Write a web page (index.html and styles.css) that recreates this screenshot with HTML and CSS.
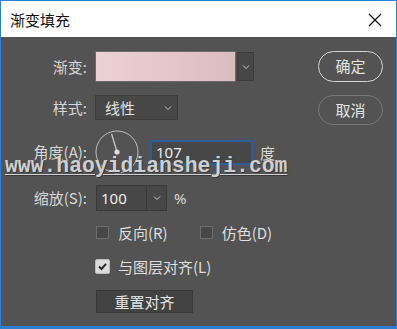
FILE: index.html
```html
<!DOCTYPE html>
<html lang="zh">
<head>
<meta charset="utf-8">
<title>渐变填充</title>
<link rel="stylesheet" href="styles.css">
</head>
<body>
<div class="window">
  <div class="titlebar">
    <span class="title">渐变填充</span>
    <svg class="close" width="14" height="14" viewBox="0 0 14 14"><path d="M1 1L13 13M13 1L1 13" stroke="#111" stroke-width="1.2" fill="none"/></svg>
  </div>
  <div class="body">
    <div class="form">
      <div class="row r1">
        <span class="label">渐变:</span>
        <div class="ctrl">
          <div class="swatch"></div>
          <div class="drop-btn"><svg width="8" height="6" viewBox="0 0 8 6"><path d="M1 1.5L4 4.5L7 1.5" stroke="#c8c8c8" stroke-width="1" fill="none"/></svg></div>
        </div>
      </div>
      <div class="row r2">
        <span class="label">样式:</span>
        <div class="ctrl">
          <div class="select"><span>线性</span><svg width="8" height="6" viewBox="0 0 8 6"><path d="M1 1.5L4 4.5L7 1.5" stroke="#c8c8c8" stroke-width="1" fill="none"/></svg></div>
        </div>
      </div>
      <div class="row r3">
        <span class="label">角度(A):</span>
        <div class="ctrl">
          <svg class="dial" width="44" height="44" viewBox="0 0 44 44">
            <circle cx="22" cy="22" r="21" stroke="#bdbdbd" stroke-width="1" fill="none"/>
            <path d="M22 22L16.6 3.8" stroke="#d0d0d0" stroke-width="1.2"/>
            <circle cx="22" cy="22" r="2.6" fill="#dcdcdc"/>
          </svg>
          <div class="angle-input">107</div>
          <span class="unit">度</span>
        </div>
      </div>
      <div class="row r4">
        <span class="label">缩放(S):</span>
        <div class="ctrl">
          <div class="scale-input"><span class="val">100</span><span class="scale-drop"><svg width="8" height="6" viewBox="0 0 8 6"><path d="M1 1.5L4 4.5L7 1.5" stroke="#c8c8c8" stroke-width="1" fill="none"/></svg></span></div>
          <span class="unit pct">%</span>
        </div>
      </div>
      <div class="row r5">
        <span class="label"></span>
        <div class="ctrl">
          <label class="check"><span class="box"></span>反向(R)</label>
          <label class="check dither"><span class="box"></span>仿色(D)</label>
        </div>
      </div>
      <div class="row r6">
        <span class="label"></span>
        <div class="ctrl">
          <label class="check"><span class="box checked"><svg width="11" height="11" viewBox="0 0 11 11"><path d="M2 5.5L4.5 8L9 2.8" stroke="#2a2a2a" stroke-width="2" fill="none"/></svg></span>与图层对齐(L)</label>
        </div>
      </div>
      <div class="row r7">
        <span class="label"></span>
        <div class="ctrl">
          <div class="reset">重置对齐</div>
        </div>
      </div>
    </div>
    <div class="actions">
      <div class="pill ok">确定</div>
      <div class="pill cancel">取消</div>
    </div>
    <div class="watermark">www.haoyidiansheji.com</div>
  </div>
</div>
</body>
</html>
```

FILE: styles.css
```css
* { box-sizing: border-box; }
html, body { margin: 0; padding: 0; }
body {
  width: 397px;
  height: 329px;
  overflow: hidden;
  font-family: "Noto Sans CJK SC", "Noto Sans", sans-serif;
  background: #535353;
}
.window {
  width: 397px;
  height: 329px;
  border: 1px solid #2d7fd4;
  border-bottom: 3px solid #2d7fd4;
  display: flex;
  flex-direction: column;
  background: #535353;
}
.titlebar {
  height: 36px;
  background: #ffffff;
  display: flex;
  align-items: center;
  justify-content: space-between;
  padding: 0 14px 0 9px;
  flex: none;
}
.title {
  font-size: 15px;
  color: #111;
  letter-spacing: 0;
}
.close { display: block; margin-top: 1px; }
.body {
  flex: 1;
  display: flex;
  position: relative;
  color: #d8d8d8;
  font-size: 15px;
}
.form {
  flex: 1;
  padding-top: 14px;
}
.row {
  display: grid;
  grid-template-columns: 86px auto;
  column-gap: 8px;
  align-items: center;
}
.label {
  text-align: right;
  line-height: 20px;
  color: #d6d6d6;
}
.ctrl {
  display: flex;
  align-items: center;
}
.r1 { height: 31px; }
.r2 { height: 25px; margin-top: 13px; }
.r3 { height: 44px; margin-top: 10px; }
.r4 { height: 26px; margin-top: 11px; }
.r5 { height: 20px; margin-top: 11px; }
.r6 { height: 20px; margin-top: 14px; }
.r7 { height: 23px; margin-top: 14px; }

.swatch {
  width: 141px;
  height: 31px;
  background: linear-gradient(90deg, #ecd1d5 0%, #e3c4c9 60%, #dbbcc1 100%);
  border: 1px solid #6a6a6a;
}
.drop-btn {
  width: 17px;
  height: 29px;
  margin-left: 1px;
  background: #474747;
  border: 1px solid #3c3c3c;
  display: flex;
  align-items: center;
  justify-content: center;
}
.drop-btn svg, .select svg, .scale-drop svg { display: block; }

.select {
  width: 83px;
  height: 25px;
  background: #474747;
  border: 1px solid #3d3d3d;
  display: flex;
  align-items: center;
  justify-content: space-between;
  padding: 0 5px 0 9px;
  color: #e2e2e2;
}
.dial { display: block; margin-left: 0; }
.angle-input {
  width: 103px;
  height: 25px;
  margin-left: 11px;
  background: #474747;
  border: 2px solid #2c5b9e;
  padding-left: 4px;
  line-height: 21px;
  color: #ececec;
  font-family: "Noto Sans", sans-serif;
  font-size: 15px;
}
.unit { margin-left: 7px; color: #d8d8d8; }
.scale-input {
  width: 71px;
  height: 26px;
  background: #474747;
  border: 1px solid #3a3a3a;
  display: flex;
  align-items: center;
  margin-left: 1px;
}
.scale-input .val {
  width: 50px;
  padding-left: 4px;
  font-family: "Noto Sans", sans-serif;
  color: #ececec;
  line-height: 24px;
  border-right: 1px solid #3a3a3a;
}
.scale-drop {
  flex: 1;
  display: flex;
  align-items: center;
  justify-content: center;
}
.pct { margin-left: 7px; font-family: "Noto Sans", sans-serif; }

.check {
  display: flex;
  align-items: center;
  color: #dedede;
  white-space: nowrap;
}
.box {
  width: 13px;
  height: 13px;
  margin-left: 1px;
  margin-right: 9px;
  background: #474747;
  border: 1px solid #6e6e6e;
  display: flex;
  align-items: center;
  justify-content: center;
}
.box.checked {
  width: 15px;
  height: 15px;
  margin-left: 0;
  margin-right: 8px;
  background: #dcdcdc;
  border: 1px solid #bcbcbc;
  border-radius: 2px;
}
.dither { margin-left: 31px; }
.reset {
  width: 97px;
  height: 23px;
  margin-left: 1px;
  background: #424242;
  border: 1px solid #393939;
  text-align: center;
  line-height: 21px;
  color: #e6e6e6;
}

.actions {
  flex: none;
  padding-top: 14px;
  padding-right: 13px;
  display: flex;
  flex-direction: column;
  gap: 13px;
}
.pill {
  width: 65px;
  height: 31px;
  border-radius: 16px;
  text-align: center;
  line-height: 28px;
  color: #e4e4e4;
}
.ok { border: 1.5px solid #d4d4d4; }
.cancel { height: 30px; border: 1.5px solid #777; }

.watermark {
  position: absolute;
  left: 4px;
  top: 117px;
  font-family: "Liberation Mono", "DejaVu Sans Mono", monospace;
  font-weight: bold;
  font-size: 21.4px;
  line-height: 24px;
  color: #cfcfcf;
  text-shadow: 1px 1px 0 #3a3a3a;
  text-decoration: underline;
  text-decoration-thickness: 1px;
  text-underline-offset: 2px;
  letter-spacing: 0;
  pointer-events: none;
}
```
